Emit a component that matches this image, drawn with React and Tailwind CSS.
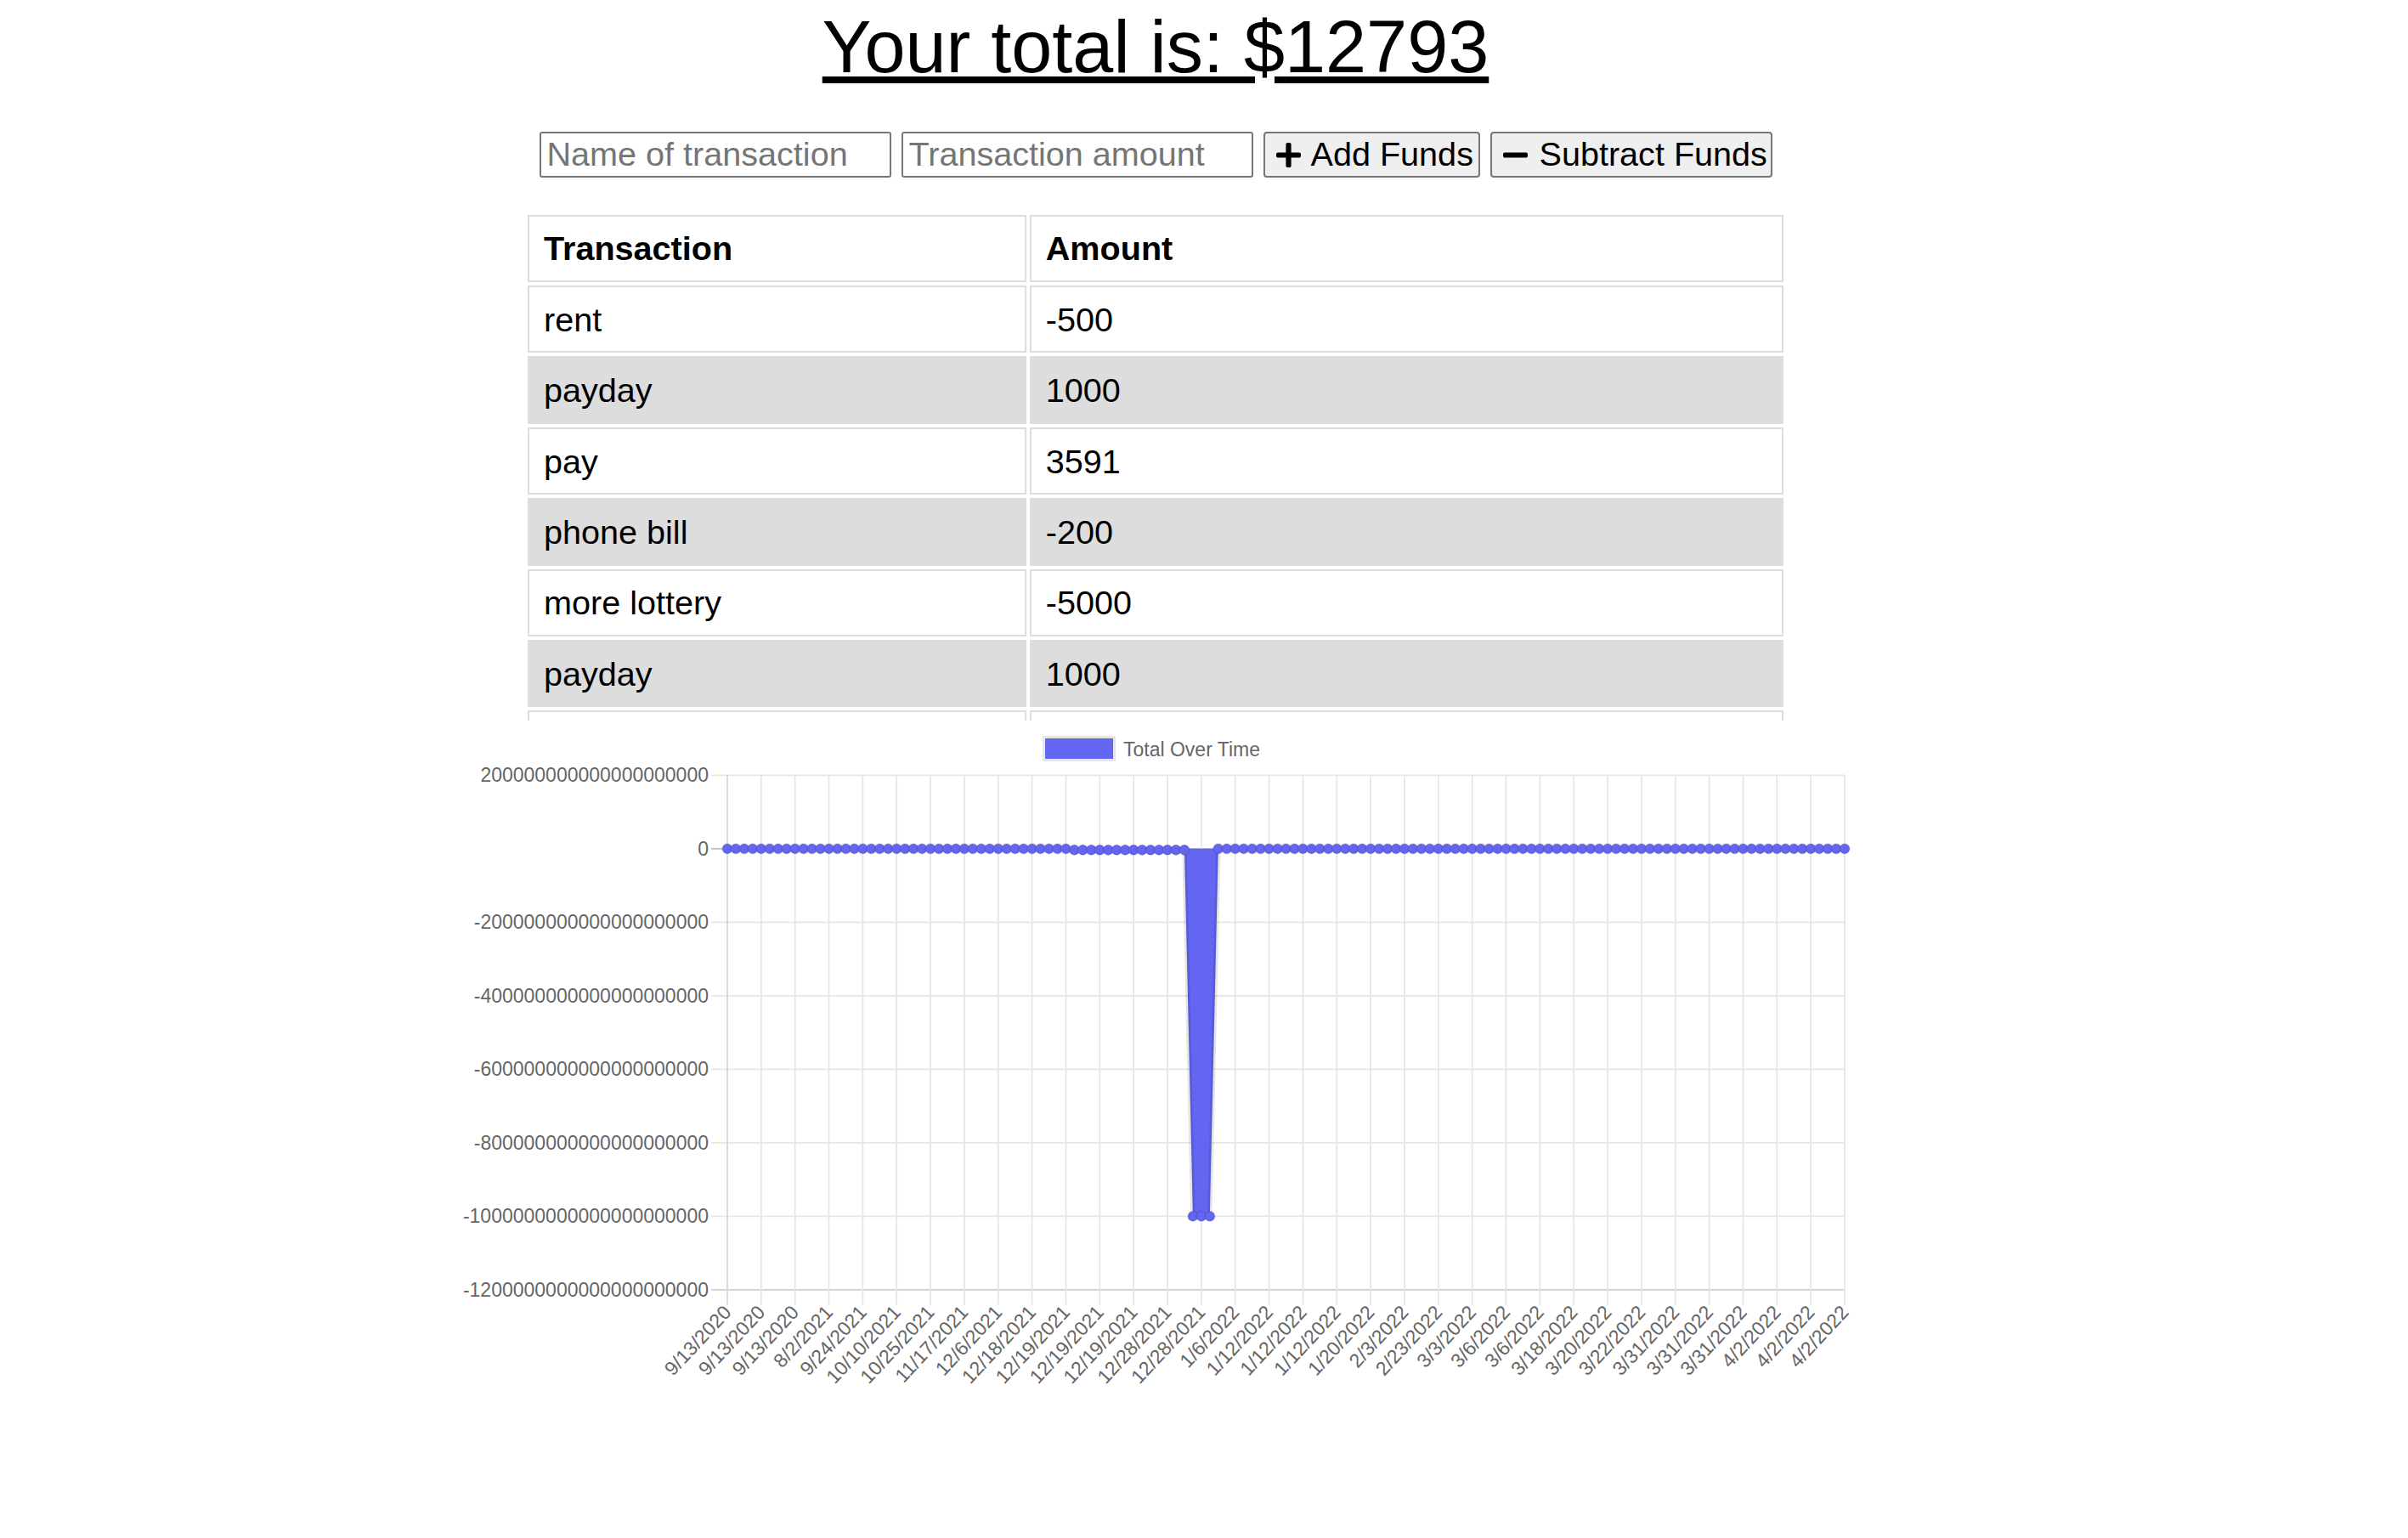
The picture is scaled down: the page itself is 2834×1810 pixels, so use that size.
import React from 'react'

const transactions = [
    { name: 'rent', value: -500 },
    { name: 'payday', value: 1000 },
    { name: 'pay', value: 3591 },
    { name: 'phone bill', value: -200 },
    { name: 'more lottery', value: -5000 },
    { name: 'payday', value: 1000 },
    { name: 'lottery', value: 5000 },
]

const labels = ['9/13/2020','9/13/2020','9/13/2020','8/2/2021','9/24/2021','10/10/2021','10/25/2021','11/17/2021','12/6/2021','12/18/2021','12/19/2021','12/19/2021','12/19/2021','12/28/2021','12/28/2021','1/6/2022','1/12/2022','1/12/2022','1/12/2022','1/20/2022','2/3/2022','2/23/2022','3/3/2022','3/6/2022','3/6/2022','3/18/2022','3/20/2022','3/22/2022','3/31/2022','3/31/2022','3/31/2022','4/2/2022','4/2/2022','4/2/2022']

const yTicks = [
    '2' + '0'.repeat(20),
    '0',
    '-2' + '0'.repeat(20),
    '-4' + '0'.repeat(20),
    '-6' + '0'.repeat(20),
    '-8' + '0'.repeat(20),
    '-1' + '0'.repeat(21),
    '-12' + '0'.repeat(20),
]

// chart geometry, page pixels
const LEFT = 856
const RIGHT = 2171
const TOP = 912.3
const STEP_Y = 86.5
const ZERO = TOP + STEP_Y
const BOTTOM = TOP + 7 * STEP_Y
const POINTS = 133
const INDIGO = '#6366f1'

const values = Array.from({ length: POINTS }, (_, j) => {
    if (j >= 55 && j <= 57) return -1e21
    if (j >= 41 && j <= 54) return -3.4e18
    return 0
})

const px = j => LEFT + j * (RIGHT - LEFT) / (POINTS - 1)
const py = v => ZERO - (v / 2e20) * STEP_Y

function PlusIcon() {
    return (
        <svg viewBox="0 32 448 448" className="w-[29px] h-[29px] shrink-0" fill="currentColor">
            <path d="M416 208H272V64c0-17.67-14.33-32-32-32h-32c-17.670 0-32 14.33-32 32v144H32c-17.67 0-32 14.33-32 32v32c0 17.67 14.33 32 32 32h144v144c0 17.67 14.33 32 32 32h32c17.67 0 32-14.33 32-32V304h144c17.67 0 32-14.33 32-32v-32c0-17.67-14.33-32-32-32z" />
        </svg>
    )
}

function MinusIcon() {
    return (
        <svg viewBox="0 32 448 448" className="w-[29px] h-[29px] shrink-0" fill="currentColor">
            <path d="M416 208H32c-17.67 0-32 14.33-32 32v32c0 17.67 14.33 32 32 32h384c17.67 0 32-14.33 32-32v-32c0-17.67-14.33-32-32-32z" />
        </svg>
    )
}

function TotalChart() {
    const line = values.map((v, j) => `${px(j)},${py(v)}`).join(' ')
    const area = `M${px(0)},${ZERO} L${line.split(' ').join(' L')} L${px(POINTS - 1)},${ZERO} Z`
    const tickX = i => LEFT + i * (RIGHT - LEFT) / (labels.length - 1)
    return (
        <svg width="1680" height="800" className="block shrink-0" style={{ fontFamily: '"Liberation Sans", Arial, sans-serif' }}>
            <g transform="translate(-520,-848)">
                {/* legend */}
                <rect x="1228.5" y="867.5" width="83" height="27" fill={INDIGO} stroke="#e6e6e6" strokeWidth="3" />
                <text x="1322" y="889.5" fontSize="23" fill="#666">Total Over Time</text>

                {/* horizontal grid + y labels */}
                {yTicks.map((t, k) => {
                    const y = TOP + k * STEP_Y
                    const stroke = k === 1 ? '#bfbfbf' : k === 7 ? '#cfcfcf' : '#e6e6e6'
                    return (
                        <g key={k}>
                            <line x1="837" x2={RIGHT} y1={y} y2={y} stroke={stroke} strokeWidth="1.8" />
                            <text x="834" y={y} dy="0.35em" textAnchor="end" fontSize="23" fill="#666">{t}</text>
                        </g>
                    )
                })}

                {/* vertical grid + x labels */}
                {labels.map((l, i) => {
                    const x = tickX(i)
                    const y0 = 1540
                    return (
                        <g key={i}>
                            <line x1={x} x2={x} y1={TOP} y2={BOTTOM + 18} stroke={i === 0 ? '#d6d6d6' : '#e6e6e6'} strokeWidth="1.8" />
                            <text x={x} y={y0} dy="0.35em" textAnchor="end" fontSize="23" fill="#666" transform={`rotate(-47 ${x} ${y0})`}>{l}</text>
                        </g>
                    )
                })}

                {/* data */}
                <path d={area} fill={INDIGO} />
                <polyline points={line} fill="none" stroke="rgba(0,0,0,0.1)" strokeWidth="5.4" strokeLinejoin="round" />
                {values.map((v, j) => (
                    <circle key={j} cx={px(j)} cy={py(v)} r="5.9" fill={INDIGO} stroke="rgba(0,0,0,0.1)" strokeWidth="1.8" />
                ))}
            </g>
        </svg>
    )
}

export default function App() {
    const total = 12793
    return (
        <div className="w-[2720px] flex flex-col items-center font-['Liberation_Sans',Arial,sans-serif] text-black bg-white">
            <h1 className="mt-[12px] text-[86.4px] leading-[86.4px] font-normal underline">Your total is: ${total}</h1>

            <div className="mt-[56.6px] flex gap-[12px] text-[39.6px]">
                <input
                    type="text"
                    placeholder="Name of transaction"
                    className="w-[414px] h-[54px] px-[7px] border-2 border-[#767676] rounded-[3px] bg-white placeholder:text-[#757575] outline-none"
                />
                <input
                    type="number"
                    placeholder="Transaction amount"
                    className="w-[414px] h-[54px] px-[7px] border-2 border-[#767676] rounded-[3px] bg-white placeholder:text-[#757575] outline-none"
                />
                <button className="w-[255px] h-[54px] pl-[13px] pr-[4px] flex items-center gap-[12px] bg-[#efefef] border-2 border-[#767676] rounded-[4px] whitespace-nowrap">
                    <PlusIcon /> Add Funds
                </button>
                <button className="w-[332px] h-[54px] pl-[13px] pr-[4px] flex items-center gap-[14px] bg-[#efefef] border-2 border-[#767676] rounded-[4px] whitespace-nowrap">
                    <MinusIcon /> Subtract Funds
                </button>
            </div>

            <div className="mt-[39.7px] h-[599px] overflow-hidden shrink-0">
                <table className="table-fixed w-[1486px] border-separate border-spacing-[4.6px] text-[39.6px] leading-[46px] text-left">
                    <thead>
                        <tr>
                            <th className="w-[586px] px-[17px] py-[14.7px] border-2 border-[#ddd] font-bold">Transaction</th>
                            <th className="w-[886px] px-[17px] py-[14.7px] border-2 border-[#ddd] font-bold">Amount</th>
                        </tr>
                    </thead>
                    <tbody>
                        {transactions.map((t, i) => {
                            const cell = i % 2 === 1
                                ? 'px-[17px] py-[14.7px] border-2 border-[#ddd] bg-[#ddd]'
                                : 'px-[17px] py-[14.7px] border-2 border-[#ddd] bg-white'
                            return (
                                <tr key={i}>
                                    <td className={cell}>{t.name}</td>
                                    <td className={cell}>{t.value}</td>
                                </tr>
                            )
                        })}
                    </tbody>
                </table>
            </div>

            <TotalChart />
        </div>
    )
}
